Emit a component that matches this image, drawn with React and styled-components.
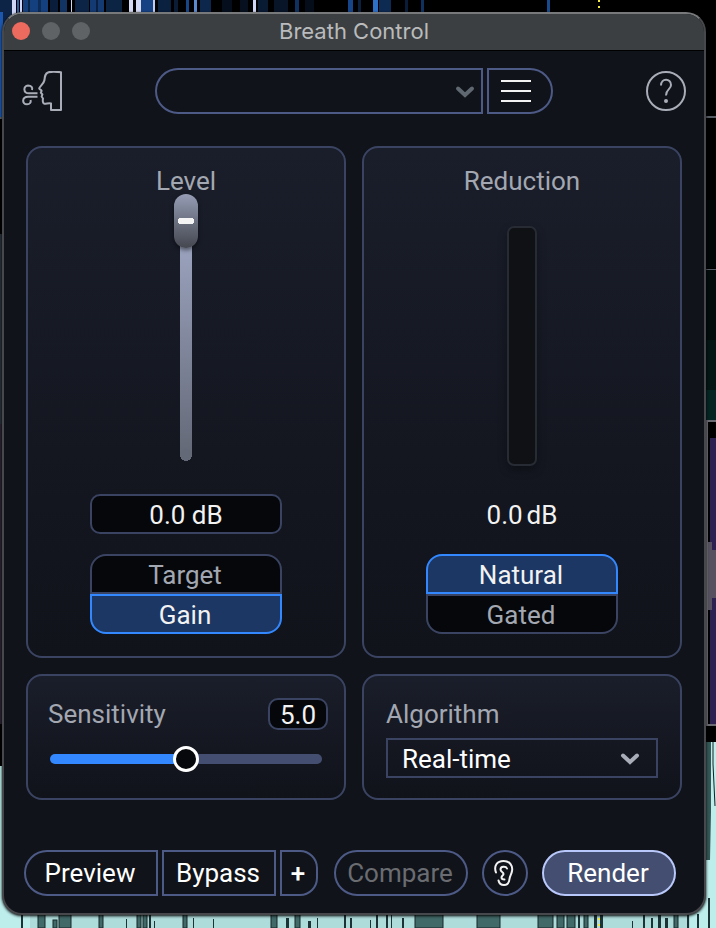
import { useState } from "react";
import styled, { ThemeProvider, createGlobalStyle } from "styled-components";

const theme = {
  window: "#10131a",
  titleBar: "#3c3f41",
  frame: "#47484c",
  text: "#f2f2f2",
  mutedText: "#a3a7b1",
  disabledText: "#6a6c71",
  panelBorder: "#3a4462",
  controlBorder: "#4d5a86",
  field: "#06070b",
  accent: "#3388ff",
  accentFill: "#1c3763",
  slate: "#444e70",
};

const GlobalStyle = createGlobalStyle`
  * {
    box-sizing: border-box;
  }

  body {
    margin: 0;
    background: #000;
    font-family: Roboto, "Liberation Sans", sans-serif;
    font-size: 26px;
  }

  button, input, select, output {
    font: inherit;
    margin: 0;
  }
`;

// [x, width, color] columns of the spectrogram above the window
const spectrum = [
  [0, 12, "#0d2447"],
  [12, 4, "#cfd6f5"],
  [17, 2, "#2b5ea8"],
  [20, 2, "#cfd6f5"],
  [23, 25, "#15407f"],
  [28, 2, "#0b2548"],
  [38, 3, "#0d2b55"],
  [50, 8, "#0a1d3a"],
  [60, 7, "#123465"],
  [71, 1, "#cfd6f5"],
  [75, 14, "#0c2547"],
  [90, 14, "#133a73"],
  [96, 2, "#0a2040"],
  [106, 16, "#0b2444"],
  [129, 4, "#d5daf5"],
  [136, 5, "#d5daf5"],
  [141, 12, "#164284"],
  [153, 2, "#c2cbee"],
  [158, 13, "#0b2140"],
  [174, 4, "#0a1c36"],
  [186, 3, "#184788"],
  [194, 3, "#5c8ad0"],
  [200, 11, "#0d274c"],
  [222, 10, "#050e1c"],
  [240, 8, "#06101f"],
  [253, 3, "#d0d6f5"],
  [258, 10, "#091a33"],
  [274, 14, "#081529"],
  [295, 4, "#10315f"],
  [305, 9, "#050d1a"],
  [348, 5, "#16458a"],
  [358, 3, "#0b203e"],
  [373, 5, "#2e70c8"],
  [379, 12, "#0d2a52"],
  [405, 3, "#0a1d38"],
  [421, 3, "#10305d"],
  [547, 3, "#184b8c"],
];

// [x, width, top] bars of the waveform below the window
const bars = [
  [21, 2, 914],
  [38, 7, 914],
  [53, 4, 920],
  [59, 12, 914],
  [99, 4, 914],
  [126, 1, 919],
  [137, 4, 914],
  [143, 4, 914],
  [149, 2, 914],
  [154, 1, 921],
  [183, 4, 914],
  [193, 1, 918],
  [213, 1, 919],
  [271, 6, 914],
  [286, 3, 918],
  [295, 5, 914],
  [308, 3, 921],
  [317, 1, 918],
  [344, 2, 914],
  [350, 2, 918],
  [370, 1, 920],
  [376, 2, 914],
  [386, 2, 914],
  [391, 1, 914],
  [402, 2, 918],
  [415, 28, 914],
  [477, 23, 914],
  [538, 15, 914],
  [557, 7, 914],
  [567, 8, 914],
  [578, 2, 914],
  [584, 4, 914],
  [594, 3, 914],
  [600, 3, 914],
  [632, 1, 921],
  [643, 2, 914],
  [651, 2, 918],
  [658, 3, 914],
  [665, 3, 918],
  [674, 4, 914],
  [687, 2, 914],
  [697, 2, 914],
  [708, 2, 898],
];

const Backdrop = () => (
  <Desktop viewBox="0 0 716 928" preserveAspectRatio="none" aria-hidden="true">
    {spectrum.map(([x, width, fill]) => (
      <rect key={x} x={x} width={width} height="34" fill={fill} />
    ))}
    <rect y="12" width="3" height="105" fill="#1c57ad" />
    <rect y="117" width="3" height="2" fill="#59616a" />
    <rect y="234" width="2" height="190" fill="#28303a" />
    <rect y="424" width="2" height="300" fill="#2a2333" />
    <rect y="766" width="30" height="162" fill="#bdeeec" />
    <rect x="706" y="116" width="10" height="2" fill="#555c63" />
    <rect x="706" y="200" width="10" height="68" fill="#010707" />
    <rect x="706" y="269" width="10" height="1" fill="#555c63" />
    <rect x="706" y="270" width="10" height="70" fill="#020c0b" />
    <rect x="706" y="340" width="10" height="50" fill="#041614" />
    <rect x="706" y="390" width="10" height="30" fill="#052522" />
    <rect x="706" y="420" width="10" height="2" fill="#6b6b73" />
    <rect x="706" y="422" width="2" height="303" fill="#6b6b73" />
    <rect x="710" y="438" width="6" height="287" fill="#2c2150" />
    <path d="M708 542h4v8h4v48h-4v12h-4z" fill="#56505f" />
    <rect x="706" y="724" width="10" height="2" fill="#6b6b73" />
    <rect x="680" y="742" width="36" height="186" fill="#bdeeec" />
    <path d="M706 742h5v70l-1 48h-4z" fill="#345756" />
    <path d="M713 742v22l2 42" stroke="#142022" fill="none" />
    <rect x="30" y="912" width="660" height="16" fill="#aedcda" />
    {bars.map(([x, width, top]) => (
      <rect
        key={x}
        x={x}
        y={top}
        width={width}
        height={928 - top}
        fill={width > 3 ? "#416968" : "#1d3235"}
        stroke={width > 3 ? "#172729" : "none"}
      />
    ))}
    <path
      d="M599 0v2M599 6v2M599 918v2M599 924v2"
      stroke="#f4ec3c"
      strokeWidth="2"
    />
  </Desktop>
);

const BreathIcon = () => (
  <svg
    width="40"
    height="40"
    fill="none"
    stroke="#a9adb7"
    strokeWidth="2"
    strokeLinejoin="round"
  >
    <path d="M39 1.200C34 .6 29 .6 26.500 1.200C22.800 2.500 22.800 5.500 22.500 9C22 12.500 18 15 17.200 17.300C17.300 18.600 19.200 18.500 19.600 19.800L18.800 21.600L20.400 23.500L19.600 25.500L21 27.500C20.500 30 20.800 32.500 22.500 32.800C24.500 33 27 31.500 29 32.500V39H39Z" />
    <path d="M15.500 22.300H7C1 22.300 1 14.800 6 14.600C9.500 14.600 10.800 16.800 10 19" />
    <path d="M15.500 25.700H6C0 25.700-.5 33.200 5 33.300C8 33.300 9.200 31.200 8.500 29" />
  </svg>
);

const HelpIcon = () => (
  <svg width="40" height="40" fill="none" stroke="#a9adb7" strokeWidth="2">
    <circle cx="20" cy="20" r="19" />
    <path d="M15 14.500C15 7 25 7 25 14C25 18.500 20 18 20 24.500" />
    <circle cx="20" cy="30" r="2" fill="#a9adb7" stroke="none" />
  </svg>
);

const EarIcon = () => (
  <svg
    width="20"
    height="28"
    fill="none"
    stroke="#f2f2f2"
    strokeWidth="2"
    strokeLinecap="round"
  >
    <path d="M2 13.500C-.5 7 3 2 9.500 2C16 2 19 7 18 12C17.500 15.500 15.800 17 15.500 20C15.200 24 13 26 10 26C7 26 5 24 4.500 21.500" />
    <path d="M13 9.500C12 7 6.500 7 6.500 10.500C6.500 13 9.500 13 9.500 15C9.500 16.500 7.500 16.500 7.500 18.500C7.500 20 9 20.500 10.500 20.500" />
  </svg>
);

const Chevron = ({ color }) => (
  <ChevronSvg width="20" height="14" aria-hidden="true">
    <path
      d="M3 4.500L10 11L17 4.500"
      fill="none"
      stroke={color}
      strokeWidth="4"
      strokeLinecap="round"
    />
  </ChevronSvg>
);

const Toggle = ({ label, options, value, onChange }) => (
  <ToggleGroup role="group" aria-label={label}>
    {options.map(option => (
      <Option
        key={option}
        type="button"
        aria-pressed={option === value}
        $active={option === value}
        onClick={() => onChange(option)}
      >
        {option}
      </Option>
    ))}
  </ToggleGroup>
);

const App = () => {
  const [level, setLevel] = useState(100);
  const [levelMode, setLevelMode] = useState("Gain");
  const [reductionMode, setReductionMode] = useState("Natural");
  const [sensitivity, setSensitivity] = useState(5);

  return (
    <ThemeProvider theme={theme}>
      <GlobalStyle />
      <Page>
        <Backdrop />
        <Window>
          <TitleBar>
            <Lights>
              <Light type="button" aria-label="Close" $color="#ed6a5e" />
              <Light type="button" aria-label="Minimize" $color="#5f6365" />
              <Light type="button" aria-label="Zoom" $color="#5f6365" />
            </Lights>
            <Title>Breath Control</Title>
          </TitleBar>

          <Body>
            <Header>
              <BreathIcon />
              <Presets>
                <PresetField>
                  <PresetSelect aria-label="Preset" defaultValue="">
                    <option value="" />
                  </PresetSelect>
                  <Chevron color="#5f6870" />
                </PresetField>
                <MenuButton type="button" aria-label="Preset menu">
                  <svg width="30" height="22" fill="#f2f2f2">
                    <path d="M0 0h30v2H0zM0 10h30v2H0zM0 20h30v2H0z" />
                  </svg>
                </MenuButton>
              </Presets>
              <HelpButton type="button" aria-label="Help">
                <HelpIcon />
              </HelpButton>
            </Header>

            <Panels>
              <Panel>
                <PanelTitle htmlFor="level">Level</PanelTitle>
                <Stage>
                  <Fader
                    id="level"
                    type="range"
                    value={level}
                    onChange={e => setLevel(Number(e.target.value))}
                  />
                </Stage>
                <LevelField aria-label="Level value" defaultValue="0.0 dB" />
                <Toggle
                  label="Level mode"
                  options={["Target", "Gain"]}
                  value={levelMode}
                  onChange={setLevelMode}
                />
              </Panel>

              <Panel>
                <PanelTitle as="h2">Reduction</PanelTitle>
                <Stage>
                  <Meter />
                </Stage>
                <Readout>
                  <span>0.0</span>
                  <span>dB</span>
                </Readout>
                <Toggle
                  label="Reduction mode"
                  options={["Natural", "Gated"]}
                  value={reductionMode}
                  onChange={setReductionMode}
                />
              </Panel>

              <Panel>
                <SettingRow>
                  <Label htmlFor="sensitivity">Sensitivity</Label>
                  <SmallField htmlFor="sensitivity">
                    {sensitivity.toFixed(1)}
                  </SmallField>
                </SettingRow>
                <Slider
                  id="sensitivity"
                  type="range"
                  min="0"
                  max="10"
                  step="0.1"
                  value={sensitivity}
                  style={{ "--fill": `${sensitivity * 10}%` }}
                  onChange={e => setSensitivity(Number(e.target.value))}
                />
              </Panel>

              <Panel>
                <Label htmlFor="algorithm">Algorithm</Label>
                <AlgorithmField>
                  <AlgorithmSelect id="algorithm">
                    <option>Real-time</option>
                  </AlgorithmSelect>
                  <Chevron color="#a9adb7" />
                </AlgorithmField>
              </Panel>
            </Panels>

            <Footer>
              <Transport>
                <Button type="button" $width={134} $round="left">
                  Preview
                </Button>
                <Button type="button" $width={114}>
                  Bypass
                </Button>
                <Button type="button" $width={38} $round="right" $bold>
                  +
                </Button>
              </Transport>
              <Actions>
                <Button type="button" $width={134} $round="both" disabled>
                  Compare
                </Button>
                <Button
                  type="button"
                  $width={46}
                  $round="both"
                  aria-label="Listen"
                >
                  <EarIcon />
                </Button>
                <RenderButton type="button" $width={134} $round="both">
                  Render
                </RenderButton>
              </Actions>
            </Footer>
          </Body>
        </Window>
      </Page>
    </ThemeProvider>
  );
};

export default App;

const Page = styled.div`
  display: grid;
  min-height: 100vh;

  > * {
    grid-area: 1 / 1;
  }
`;

const Desktop = styled.svg`
  width: 100%;
  height: 0;
  min-height: 100%;
`;

const Window = styled.main`
  z-index: 1;
  align-self: start;
  margin: 12px 10px 12px 2px;
  border: 2px solid ${props => props.theme.frame};
  border-top-color: #77797a;
  border-radius: 20px;
  background: ${props => props.theme.window};
  overflow: hidden;
  box-shadow: 0 1px 3px #000;
`;

const TitleBar = styled.div`
  display: grid;
  grid-template-columns: 1fr auto 1fr;
  align-items: center;
  height: 37px;
  padding: 0 8px 2px;
  border-bottom: 1px solid #000;
  background: ${props => props.theme.titleBar};
`;

const Lights = styled.div`
  display: flex;
  gap: 12px;
`;

const Light = styled.button`
  width: 18px;
  height: 18px;
  padding: 0;
  border: 0;
  border-radius: 50%;
  background: ${props => props.$color};
`;

const Title = styled.h1`
  margin: 0;
  font: 400 22px/32px Inter, sans-serif;
  color: #b9bbbc;
`;

const Body = styled.div`
  display: flex;
  flex-direction: column;
  padding: 17px 22px;
`;

const Header = styled.header`
  display: flex;
  align-items: center;
  justify-content: space-between;
  margin: 0 -4px 32px;
`;

const Presets = styled.div`
  display: flex;
  flex: 0 1 398px;
  gap: 4px;
  height: 46px;
`;

const PresetField = styled.div`
  display: grid;
  flex: 1;
  align-items: center;

  > * {
    grid-area: 1 / 1;
  }
`;

const ChevronSvg = styled.svg`
  justify-self: end;
  margin-right: 8px;
  pointer-events: none;
`;

const PresetSelect = styled.select`
  appearance: none;
  width: 100%;
  height: 46px;
  padding: 0 40px 0 20px;
  border: 2px solid ${props => props.theme.controlBorder};
  border-radius: 23px 0 0 23px;
  background: transparent;
  color: ${props => props.theme.text};
`;

const MenuButton = styled.button`
  display: flex;
  align-items: center;
  width: 66px;
  padding: 0 12px;
  border: 2px solid ${props => props.theme.controlBorder};
  border-radius: 0 23px 23px 0;
  background: transparent;
`;

const HelpButton = styled.button`
  display: flex;
  padding: 0;
  border: 0;
  background: transparent;
`;

const Panels = styled.div`
  display: grid;
  grid-template-columns: 1fr 1fr;
  gap: 16px;
`;

const Panel = styled.section`
  display: flex;
  flex-direction: column;
  padding: 20px 22px 22px;
  border: 2px solid ${props => props.theme.panelBorder};
  border-radius: 16px;
  background: linear-gradient(#1a1e2a, #141720 60%, #10131a);

  &:nth-child(n + 3) {
    padding: 22px 22px 20px;
  }
`;

const PanelTitle = styled.label`
  margin: 0;
  font-size: 26px;
  font-weight: 400;
  line-height: 26px;
  text-align: center;
  color: ${props => props.theme.mutedText};
`;

const Stage = styled.div`
  display: flex;
  justify-content: center;
  height: 300px;
`;

const Fader = styled.input`
  appearance: none;
  writing-mode: vertical-lr;
  direction: rtl;
  width: 24px;
  height: 267px;
  background:
    radial-gradient(circle at 12px 261px, #646977 6px, transparent 6px),
    linear-gradient(#a4adcb, #646977) 6px 12px / 12px 249px no-repeat;

  &::-webkit-slider-thumb {
    appearance: none;
    width: 24px;
    height: 54px;
    border-radius: 12px;
    background:
      radial-gradient(circle at 7px 27px, #f4f4f4 3px, transparent 3px),
      radial-gradient(circle at 17px 27px, #f4f4f4 3px, transparent 3px),
      linear-gradient(#f4f4f4, #f4f4f4) center / 10px 6px no-repeat,
      linear-gradient(#969db5, #44474f);
    box-shadow: 0 2px 4px rgba(0, 0, 0, 0.5);
  }
`;

const Meter = styled.div`
  width: 30px;
  height: 240px;
  margin-top: 32px;
  border: 2px solid #262b34;
  border-radius: 7px;
  background: #0f1114;
  box-shadow: 0 4px 10px rgba(0, 0, 0, 0.3);
`;

const LevelField = styled.input`
  align-self: center;
  width: 192px;
  height: 40px;
  padding: 2px 0 0;
  border: 2px solid ${props => props.theme.panelBorder};
  border-radius: 10px;
  background: ${props => props.theme.field};
  color: ${props => props.theme.text};
  text-align: center;
`;

const Readout = styled.output`
  display: flex;
  justify-content: center;
  gap: 4px;
  height: 40px;
  line-height: 42px;
  color: ${props => props.theme.text};
`;

const ToggleGroup = styled.div`
  display: flex;
  flex-direction: column;
  align-self: center;
  width: 192px;
  margin-top: 20px;
`;

const Option = styled.button`
  height: 40px;
  padding: 2px 2px 0 0;
  border: 2px solid
    ${props => (props.$active ? props.theme.accent : props.theme.panelBorder)};
  background: ${props =>
    props.$active ? props.theme.accentFill : props.theme.field};
  color: ${props => (props.$active ? props.theme.text : props.theme.mutedText)};

  &:first-child {
    border-radius: 16px 16px 0 0;
  }

  &:last-child {
    border-radius: 0 0 16px 16px;
  }
`;

const SettingRow = styled.div`
  display: flex;
  justify-content: space-between;
  margin: 0 -6px 0 -2px;
`;

const Label = styled.label`
  margin-bottom: 8px;
  line-height: 32px;
  color: ${props => props.theme.mutedText};
`;

const SmallField = styled.output`
  width: 60px;
  height: 32px;
  border: 2px solid ${props => props.theme.panelBorder};
  border-radius: 10px;
  background: ${props => props.theme.field};
  color: ${props => props.theme.text};
  line-height: 30px;
  text-align: center;
`;

const Slider = styled.input`
  appearance: none;
  width: 100%;
  height: 40px;
  padding-top: 2px;
  background: transparent;

  &::-webkit-slider-runnable-track {
    height: 10px;
    border-radius: 5px;
    background: linear-gradient(
      to right,
      ${props => props.theme.accent} var(--fill),
      ${props => props.theme.slate} var(--fill)
    );
  }

  &::-webkit-slider-thumb {
    appearance: none;
    width: 26px;
    height: 26px;
    margin-top: -8px;
    border: 3px solid #fff;
    border-radius: 50%;
    background: #07080b;
  }
`;

const AlgorithmField = styled.div`
  display: grid;
  align-items: center;

  > * {
    grid-area: 1 / 1;
  }

  ${ChevronSvg} {
    margin-right: 18px;
  }
`;

const AlgorithmSelect = styled.select`
  appearance: none;
  width: 100%;
  height: 40px;
  padding: 2px 40px 0 14px;
  border: 2px solid ${props => props.theme.panelBorder};
  border-radius: 0;
  background: transparent;
  color: #fff;
`;

const Footer = styled.footer`
  display: flex;
  flex-wrap: wrap;
  justify-content: space-between;
  gap: 16px;
  margin: 50px 6px 0 -2px;
`;

const Transport = styled.div`
  display: flex;
  gap: 4px;
`;

const Actions = styled.div`
  display: flex;
  gap: 14px;
`;

const radii = {
  left: "23px 0 0 23px",
  right: "0 18px 18px 0",
  both: "23px",
};

const Button = styled.button`
  display: flex;
  align-items: center;
  justify-content: center;
  width: ${props => props.$width}px;
  height: 46px;
  padding: 0 2px 0 0;
  border: 2px solid ${props => props.theme.controlBorder};
  border-radius: ${props => radii[props.$round] || 0};
  background: transparent;
  color: #fff;
  font-weight: ${props => (props.$bold ? 500 : 400)};

  &:disabled {
    color: ${props => props.theme.disabledText};
  }
`;

const RenderButton = styled(Button)`
  border-color: #b9c8fb;
  background: ${props => props.theme.slate};
`;
